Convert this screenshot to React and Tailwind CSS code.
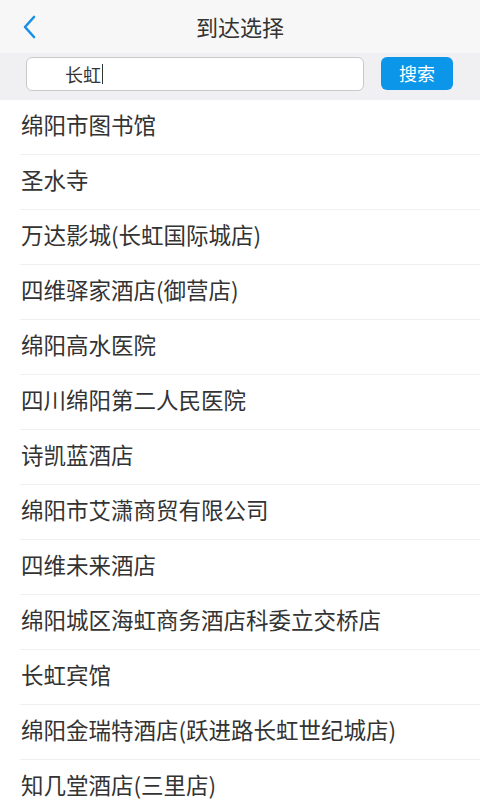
export default function App() {
  const items = [
    "绵阳市图书馆",
    "圣水寺",
    "万达影城(长虹国际城店)",
    "四维驿家酒店(御营店)",
    "绵阳高水医院",
    "四川绵阳第二人民医院",
    "诗凯蓝酒店",
    "绵阳市艾潇商贸有限公司",
    "四维未来酒店",
    "绵阳城区海虹商务酒店科委立交桥店",
    "长虹宾馆",
    "绵阳金瑞特酒店(跃进路长虹世纪城店)",
    "知几堂酒店(三里店)",
  ];
  return (
    <div
      className="w-[480px] h-[800px] overflow-hidden bg-white flex flex-col"
      style={{ fontFamily: '"Noto Sans CJK SC", "Noto Sans", sans-serif' }}
    >
      <div className="h-[53px] bg-[#f7f7f7] flex items-center relative shrink-0">
        <svg
          className="absolute left-[20px] top-[14px]"
          width="18"
          height="26"
          viewBox="0 0 18 26"
        >
          <path
            d="M14 3 L5 13 L14 23"
            fill="none"
            stroke="#1a8fe8"
            strokeWidth="2.6"
            strokeLinecap="round"
            strokeLinejoin="round"
          />
        </svg>
        <div className="w-full text-center text-[22px] text-[#333333] leading-none pb-[1px]">
          到达选择
        </div>
      </div>
      <div className="h-[47px] bg-[#f0f0f2] flex items-start pt-[4px] shrink-0">
        <div className="ml-[26px] w-[338px] h-[34px] bg-white border border-[#c9c9c9] rounded-[6px] flex items-center pl-[38px] text-[18px] text-[#333333]">
          <span>长虹</span>
          <span className="w-[1px] h-[20px] bg-[#333333] ml-[1px]"></span>
        </div>
        <div className="ml-[17px] w-[72px] h-[33px] bg-[#0b96ea] rounded-[6px] flex items-center justify-center text-white text-[18px]">
          搜索
        </div>
      </div>
      <div className="flex flex-col">
        {items.map((t, i) => (
          <div
            key={i}
            className="h-[55px] ml-[20px] border-b border-[#f0f0f0] flex items-center pl-[1px] pb-[4px] text-[22.5px] text-[#333333] shrink-0 whitespace-nowrap"
          >
            {t}
          </div>
        ))}
      </div>
    </div>
  );
}
